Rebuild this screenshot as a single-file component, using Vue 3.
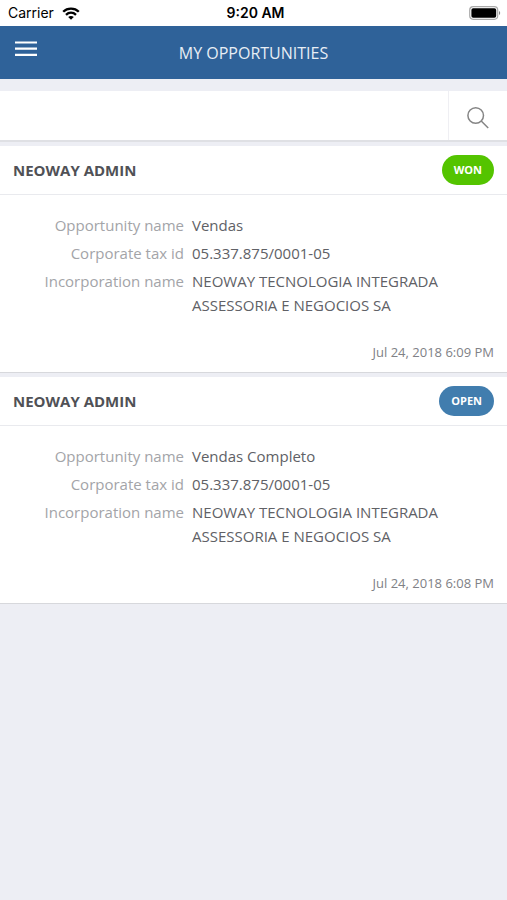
<script setup>
const items = [
  { owner: 'NEOWAY ADMIN', status: 'WON', name: 'Vendas', tax: '05.337.875/0001-05', company: 'NEOWAY TECNOLOGIA INTEGRADA ASSESSORIA E NEGOCIOS SA', date: 'Jul 24, 2018 6:09 PM' },
  { owner: 'NEOWAY ADMIN', status: 'OPEN', name: 'Vendas Completo', tax: '05.337.875/0001-05', company: 'NEOWAY TECNOLOGIA INTEGRADA ASSESSORIA E NEGOCIOS SA', date: 'Jul 24, 2018 6:08 PM' },
]
</script>

<template>
  <div class="app">
    <div class="status">
      <div class="carrier">
        <span>Carrier</span>
        <svg width="18" height="13" viewBox="0 0 18 13" aria-hidden="true">
          <path d="M1.2 4.7C5.4.5 12.6.5 16.8 4.7M4 7.8c2.9-2.8 7.1-2.8 10 0" fill="none" stroke="#000" stroke-width="2.3" />
          <path d="M9 12.8 6.2 10c1.6-1.5 4-1.5 5.6 0z" />
        </svg>
      </div>
      <span class="time">9:20 AM</span>
      <svg class="battery" width="32" height="14" viewBox="0 0 32 14" aria-hidden="true">
        <rect x=".7" y=".7" width="28" height="12.6" rx="3.5" fill="none" stroke="#aaa" stroke-width="1.2" />
        <rect x="2.4" y="2.2" width="24.8" height="9.6" rx="1.8" />
        <path d="M30 5c1.6.6 1.6 3.4 0 4z" fill="#888" />
      </svg>
    </div>
    <header class="bar">
      <button class="menu" aria-label="Menu">
        <svg width="22" height="16" viewBox="0 0 22 16"><path d="M0 1.5h22M0 7.7h22M0 13.9h22" stroke="#fff" stroke-width="2.2" /></svg>
      </button>
      <h1>MY OPPORTUNITIES</h1>
    </header>
    <form class="search" @submit.prevent>
      <input type="search" aria-label="Search opportunities" />
      <button aria-label="Search">
        <svg width="24" height="24" viewBox="0 0 24 24" fill="none" stroke="#858585" stroke-width="1.5"><circle cx="9.7" cy="9.5" r="7.8" /><path d="m15.2 15 7 7" /></svg>
      </button>
    </form>
    <main>
      <article v-for="item in items" :key="item.date" class="card">
        <div class="head">
          <h2>{{ item.owner }}</h2>
          <span class="badge" :class="item.status.toLowerCase()">{{ item.status }}</span>
        </div>
        <dl>
          <dt>Opportunity name</dt><dd>{{ item.name }}</dd>
          <dt>Corporate tax id</dt><dd>{{ item.tax }}</dd>
          <dt>Incorporation name</dt><dd>{{ item.company }}</dd>
        </dl>
        <time>{{ item.date }}</time>
      </article>
    </main>
  </div>
</template>

<style>
body { margin: 0; background: #edeef4; }
</style>

<style scoped>
.app { font-family: "Open Sans", sans-serif; color: #606166; min-height: 100vh; background: #edeef4; }
.status { display: grid; grid-template-columns: 1fr auto 1fr; align-items: center; height: 26px; padding: 0 6px 0 8px; background: #fff; color: #000; font: 14px/26px Inter, sans-serif; }
.carrier { display: flex; align-items: center; gap: 8px; }
.time { padding-left: 2px; font-weight: 600; }
.battery { justify-self: end; }
.bar { display: grid; grid-template-columns: 52px 1fr 52px; align-items: center; height: 53px; background: #2f6299; color: #fff; }
.menu { display: flex; justify-content: center; align-items: center; height: 44px; padding: 0 0 8px; border: 0; background: none; }
h1 { margin: 0; font-size: 16px; line-height: 24px; font-weight: 400; text-align: center; color: #e8eef5; }
.search { display: flex; height: 49px; margin-top: 12px; background: #fff; border-bottom: 2px solid #dfe0e4; }
.search input { flex: 1; min-width: 0; padding: 0 13px; border: 0; outline: 0; background: none; font: inherit; appearance: none; }
.search button { display: flex; align-items: center; justify-content: center; width: 59px; padding: 4px 0 0; border: 0; border-left: 1px solid #efeff3; background: none; }
main { display: flex; flex-direction: column; gap: 4px; margin-top: 4px; }
.card { display: flex; flex-direction: column; background: #fff; border-bottom: 1px solid #d7d8dc; }
.head { display: flex; justify-content: space-between; align-items: center; height: 48px; padding: 0 13px; border-bottom: 1px solid #e9eaee; }
h2 { margin: 0; font-size: 15px; line-height: 24px; font-weight: 700; color: #505156; }
.badge { padding: 0 12px; border-radius: 15px; color: #fff; font-size: 11px; line-height: 30px; font-weight: 700; }
.won { background: #54c400; }
.open { background: #417dae; }
dl { display: grid; grid-template-columns: 171px minmax(0, 250px); column-gap: 8px; row-gap: 4px; margin: 18px 0 0 13px; font-size: 15px; line-height: 24px; }
dt { color: #a3a4a8; text-align: right; }
dd { margin: 0; }
time { align-self: flex-end; padding: 24px 13px 9px; font-size: 13px; line-height: 22px; color: #808186; }
</style>
